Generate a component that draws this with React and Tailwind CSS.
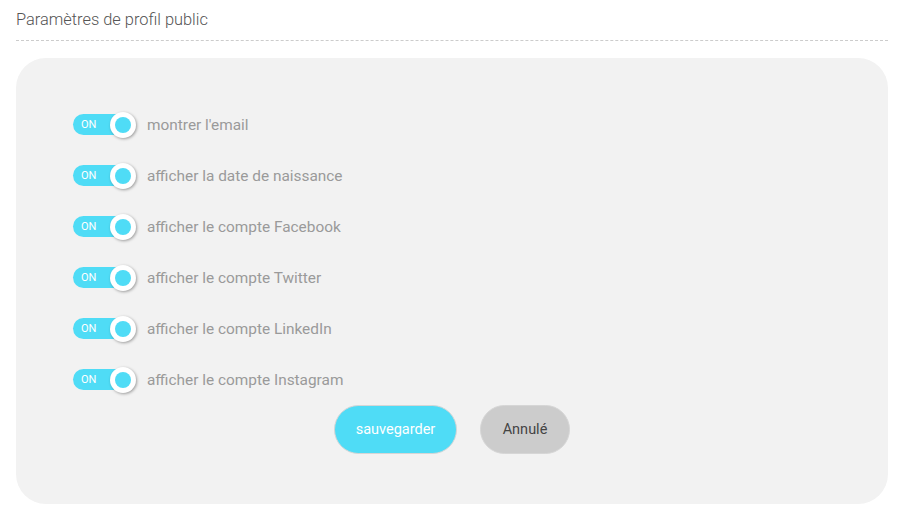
export default function App() {
  const rows = [
    "montrer l'email",
    "afficher la date de naissance",
    "afficher le compte Facebook",
    "afficher le compte Twitter",
    "afficher le compte LinkedIn",
    "afficher le compte Instagram",
  ];
  return (
    <div className="w-[907px] h-[516px] bg-white pl-4 pt-[8px]" style={{ fontFamily: "Roboto, 'Liberation Sans', sans-serif" }}>
      <div className="w-[872px] h-[33px] border-b border-dashed border-[#cccccc] flex items-start">
        <span className="text-[16.4px] font-light text-[#555555] leading-[23px]">Paramètres de profil public</span>
      </div>
      <div className="mt-[17px] w-[872px] h-[446px] bg-[#f2f2f2] rounded-[30px] pl-[57px] pt-[41px]">
        {rows.map((r) => (
          <div key={r} className="h-[51px] flex items-center">
            <div className="relative w-[63px] h-[26px] flex items-center">
              <div className="w-[62px] h-[21px] rounded-full bg-[#4fdcf6] flex items-center pl-[8px]">
                <span className="text-[11px] text-white leading-none">ON</span>
              </div>
              <div className="absolute right-0 top-0 w-[26px] h-[26px] rounded-full bg-white shadow-[1px_1px_3px_rgba(0,0,0,0.35)] flex items-center justify-center">
                <div className="w-[16px] h-[16px] rounded-full bg-[#4fdcf6]" />
              </div>
            </div>
            <span className="ml-[11px] text-[15.4px] text-[#9a9a9a] pt-[2px]">{r}</span>
          </div>
        ))}
        <div className="flex justify-center gap-[23px] pr-[57px]">
          <button className="w-[123px] h-[49px] rounded-full bg-[#4fdcf6] border border-[#d6d6d6] text-white text-[14.5px]">sauvegarder</button>
          <button className="w-[90px] h-[49px] rounded-full bg-[#cccccc] border border-[#d6d6d6] text-[#444444] text-[14.5px]">Annulé</button>
        </div>
      </div>
    </div>
  );
}
